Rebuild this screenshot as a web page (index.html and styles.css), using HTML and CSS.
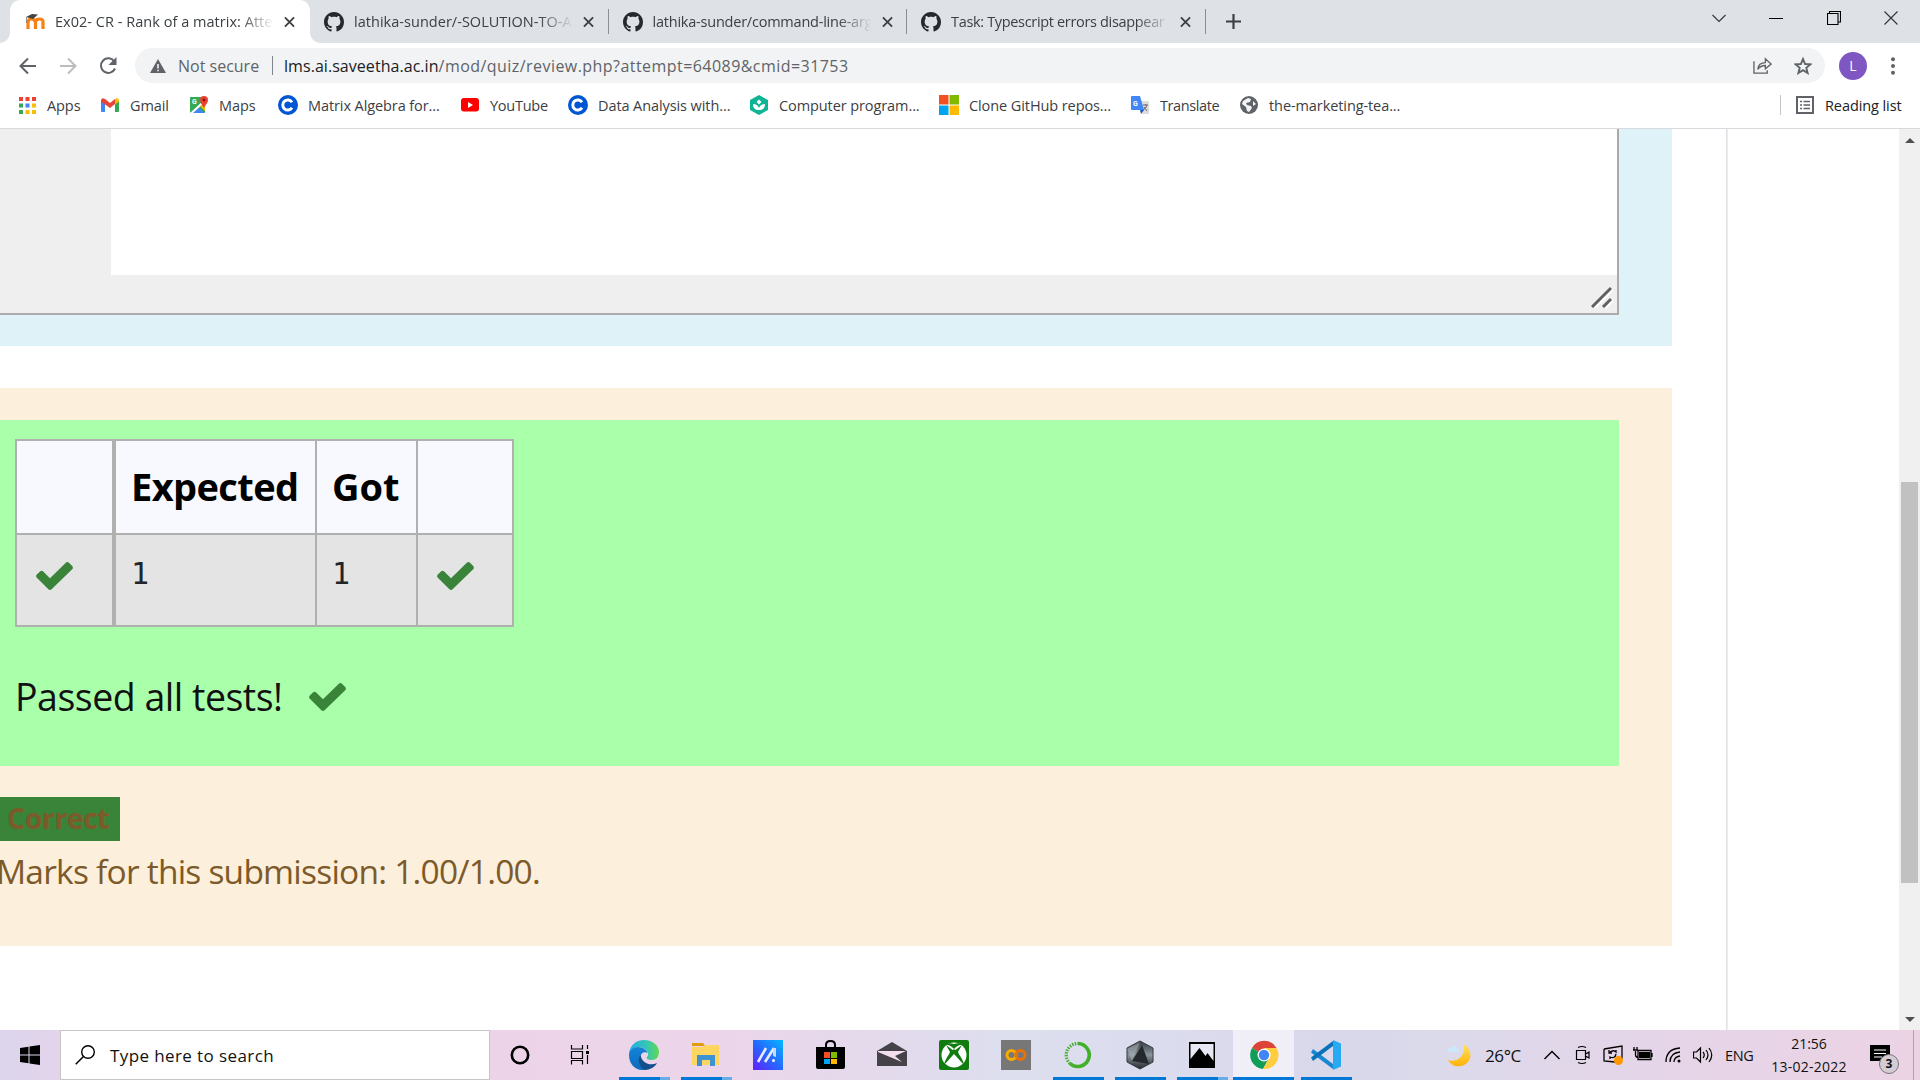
FILE: index.html
```html
<!DOCTYPE html>
<html lang="en">
<head>
<meta charset="utf-8">
<title>Ex02- CR - Rank of a matrix: Attempt review</title>
<link rel="stylesheet" href="styles.css">
</head>
<body>
<svg width="0" height="0" class="defs">
  <symbol id="github" viewBox="0 0 16 16"><path fill="#24292f" d="M8 0C3.58 0 0 3.58 0 8c0 3.54 2.29 6.53 5.47 7.59.4.07.55-.17.55-.38 0-.19-.01-.82-.01-1.49-2.01.37-2.53-.49-2.69-.94-.09-.23-.48-.94-.82-1.13-.28-.15-.68-.52-.01-.53.63-.01 1.08.58 1.23.82.72 1.21 1.87.87 2.33.66.07-.52.28-.87.51-1.07-1.78-.2-3.64-.89-3.64-3.95 0-.87.31-1.59.82-2.15-.08-.2-.36-1.02.08-2.12 0 0 .67-.21 2.2.82.64-.18 1.32-.27 2-.27s1.36.09 2 .27c1.53-1.04 2.2-.82 2.2-.82.44 1.1.16 1.92.08 2.12.51.56.82 1.27.82 2.15 0 3.07-1.87 3.75-3.65 3.95.29.25.54.73.54 1.48 0 1.07-.01 1.93-.01 2.2 0 .21.15.46.55.38A8.01 8.01 0 0 0 16 8c0-4.42-3.58-8-8-8z"/></symbol>
  <symbol id="close" viewBox="0 0 12 12"><path d="M1 1l10 10M11 1L1 11" stroke="#3c4043" stroke-width="2" fill="none"/></symbol>
  <symbol id="check" viewBox="0 0 37 28"><path fill="#398439" d="M36.2 7.3L15.6 27.2c-.9.9-2.3.9-3.200 0L.8 15.800c-.9-.9-.9-2.300 0-3.200l3.200-3.100c.9-.9 2.300-.9 3.200 0l6.800 6.700L29.800.7c.9-.9 2.300-.9 3.200 0l3.200 3.300c.9.900.9 2.400 0 3.300z"/></symbol>
  <symbol id="coursera" viewBox="0 0 20 20"><circle cx="10" cy="10" r="10" fill="#0056d2"/><path d="M14 7.300A5 5 0 1 0 14 12.700" fill="none" stroke="#fff" stroke-width="3"/></symbol>
</svg>
<header class="browser">
  <div class="tabstrip">
    <div class="tab active">
      <svg class="fav" viewBox="0 0 20 20"><path d="M3 17V10.500Q3 7 6.500 7T10.500 10.500V17M10.500 10.500Q10.500 7 14.500 7T18 10.500V17" fill="none" stroke="#f98012" stroke-width="3.200"/><path d="M1 5L7 2 13 2.500 8 7Z" fill="#444"/><path d="M1.500 5v6" stroke="#777" stroke-width=".8"/></svg>
      <span class="tab-title">Ex02- CR - Rank of a matrix: Atte</span><svg class="x"><use href="#close"/></svg>
    </div>
    <div class="tab"><svg class="fav"><use href="#github"/></svg><span class="tab-title">lathika-sunder/-SOLUTION-TO-A</span><svg class="x"><use href="#close"/></svg></div>
    <div class="tab"><svg class="fav"><use href="#github"/></svg><span class="tab-title tight">lathika-sunder/command-line-arg</span><svg class="x"><use href="#close"/></svg></div>
    <div class="tab"><svg class="fav"><use href="#github"/></svg><span class="tab-title tighter">Task: Typescript errors disappear</span><svg class="x"><use href="#close"/></svg></div>
    <svg class="plus" viewBox="0 0 15 15"><path d="M7.500 0v15M0 7.500h15" stroke="#3c4043" stroke-width="2.200"/></svg>
    <div class="wincontrols">
      <svg viewBox="0 0 14 14"><path d="M.5 4l6.500 6.500L13.500 4" fill="none" stroke="#333" stroke-width="1.100"/></svg>
      <svg viewBox="0 0 14 14"><path d="M0 7.500h14" stroke="#000"/></svg>
      <svg viewBox="0 0 14 14"><path d="M.5 2.500h10.500v11H.5zM2.500 2.500v-2h11v10.500H11" fill="none" stroke="#000" stroke-width="1.100"/></svg>
      <svg viewBox="0 0 14 14"><path d="M.5.5l13 13M13.500.5l-13 13" stroke="#333" stroke-width="1.100"/></svg>
    </div>
  </div>
  <div class="toolbar">
    <svg class="nav" viewBox="0 0 18 18"><path d="M17 9H2M9 1.500L1.500 9 9 16.500" fill="none" stroke="#5f6368" stroke-width="2"/></svg>
    <svg class="nav" viewBox="0 0 18 18"><path d="M1 9h15M9 1.500L16.500 9 9 16.500" fill="none" stroke="#babcbe" stroke-width="2"/></svg>
    <svg class="nav" viewBox="0 0 18 18"><path d="M15.300 4.500A7.300 7.300 0 1 0 16 11.500" fill="none" stroke="#5f6368" stroke-width="2"/><path d="M17.500 0v8h-8z" fill="#5f6368"/></svg>
    <div class="omnibox">
      <svg class="warn" viewBox="0 0 16 14"><path d="M8 0l8 14H0z" fill="#5f6368"/><path d="M8 5v4.500M8 10.700v1.600" stroke="#f1f3f4" stroke-width="1.600"/></svg>
      <span class="secure">Not secure</span><i class="bar"></i>
      <span class="host">lms.ai.saveetha.ac.in</span><span class="path">/mod/quiz/review.php?attempt=64089&amp;cmid=31753</span>
      <svg class="share" viewBox="0 0 20 18"><path d="M1 4.500V17h14v-3M5 13c.5-5 3-7 8-7V2l6 5.500-6 5V9c-4 0-6 1-8 4z" fill="none" stroke="#5f6368" stroke-width="1.400"/></svg>
      <svg class="star" viewBox="0 0 18 18"><path d="M9 2l2.100 5 5.300.4-4.100 3.400 1.300 5.200L9 13.200 4.400 16l1.300-5.200-4.100-3.400L6.900 7z" fill="none" stroke="#5f6368" stroke-width="1.900"/></svg>
    </div>
    <span class="avatar">L</span>
    <svg class="dots" viewBox="0 0 4 18"><g fill="#5f6368"><circle cx="2" cy="2.200" r="2"/><circle cx="2" cy="9" r="2"/><circle cx="2" cy="15.800" r="2"/></g></svg>
  </div>
  <div class="bookmarks">
    <a class="bm"><svg class="i17" viewBox="0 0 17 17"><path fill="#ea4335" d="M0 0h4v4H0zM6.500 0h4v4h-4zM13 0h4v4h-4z"/><path fill="#34a853" d="M0 6.500h4v4H0zM0 13h4v4H0z"/><path fill="#4285f4" d="M6.500 6.500h4v4h-4z"/><path fill="#fbbc04" d="M13 6.500h4v4h-4zM6.500 13h4v4h-4zM13 13h4v4h-4z"/></svg><span>Apps</span></a>
    <a class="bm"><svg viewBox="0 0 18 14"><path fill="#4285f4" d="M0 2l4 3v9H1Q0 14 0 13z"/><path fill="#34a853" d="M18 2l-4 3v9h3q1 0 1-1z"/><path fill="#ea4335" d="M0 2Q1-1 4 1l5 4 5-4v5L9 10 0 3.500z"/><path fill="#fbbc04" d="M14 1q3-2 4 1v1.500L14 6.500z"/></svg><span>Gmail</span></a>
    <a class="bm"><svg viewBox="0 0 18 18"><rect y="1" width="15" height="16" rx="1" fill="#34a853"/><path d="M2 17L8 11l7 6z" fill="#4285f4"/><path d="M0 17L14 4v3L3 17z" fill="#fff"/><path d="M10 10l5 5V9z" fill="#fbbc04"/><text x="2" y="8" class="tiny">G</text><path d="M14 12C12 8 10 7 10 4a4 4 0 0 1 8 0c0 3-2 4-4 8z" fill="#ea4335"/><circle cx="14" cy="4" r="1.400" fill="#811"/></svg><span>Maps</span></a>
    <a class="bm"><svg class="i20"><use href="#coursera"/></svg><span>Matrix Algebra for...</span></a>
    <a class="bm youtube"><svg viewBox="0 0 18 14"><rect width="18" height="13.500" rx="3" fill="red"/><path d="M7 4l5 3-5 3z" fill="#fff"/></svg><span>YouTube</span></a>
    <a class="bm"><svg class="i20"><use href="#coursera"/></svg><span>Data Analysis with...</span></a>
    <a class="bm"><svg class="i20" viewBox="0 0 20 20"><path d="M10 0l9 5v10l-9 5-9-5V5z" fill="#0fb494"/><path d="M10 15c-4 0-6-2-6-6 3 0 5 1.500 6 4 1-2.500 3-4 6-4 0 4-2 6-6 6zM10 4.500l2.500 2.500L10 9.500 7.500 7z" fill="#fff"/></svg><span>Computer program...</span></a>
    <a class="bm"><svg class="i20" viewBox="0 0 20 20"><path fill="#f25022" d="M0 0h9.500v9.500H0z"/><path fill="#7fba00" d="M10.500 0H20v9.500h-9.500z"/><path fill="#00a4ef" d="M0 10.500h9.500V20H0z"/><path fill="#ffb900" d="M10.500 10.500H20V20h-9.500z"/></svg><span>Clone GitHub repos...</span></a>
    <a class="bm translate"><svg viewBox="0 0 18 18"><path d="M8 5h9q1 0 1 1v11q0 1-1 1h-6z" fill="#ddd"/><path d="M1 0h8l4 14H1Q0 14 0 13V1q0-1 1-1z" fill="#4285f4"/><path d="M9 14h4l-3 4z" fill="#1a56b8"/><text x="2" y="10" class="tiny">G</text><path d="M12 9h5M14.500 8v1M16 9q-1 4-4 5M13 11l3 4" stroke="#666" fill="none"/></svg><span>Translate</span></a>
    <a class="bm"><svg viewBox="0 0 18 18"><circle cx="9" cy="9" r="9" fill="#5f6368"/><path d="M3 5l5-3 3 1-1 3-4 1 1 2 4 1 1 2-3 4-2-1-1-4-4-3zM13 5l3 3-3 2z" fill="#f4f4f4"/></svg><span>the-marketing-tea...</span></a>
    <a class="bm reading"><svg viewBox="0 0 18 18"><path d="M1 1h16v16H1z" fill="none" stroke="#5f6368" stroke-width="2"/><path d="M4 5.500h2M4 9h2M4 12.500h2M7.500 5.500H14M7.500 9H14M7.500 12.500H14" stroke="#5f6368" stroke-width="1.500"/></svg><span>Reading list</span></a>
  </div>
</header>
<main class="page">
  <section class="content">
    <div class="question">
      <div class="editor"><div class="code"></div><div class="foot"><svg viewBox="0 0 22 22"><path d="M3 22L22 3M14 22l8-8" stroke="#fff" stroke-width="3"/><path d="M1 21L20 2M12 21l8-8" stroke="#606060" stroke-width="3"/></svg></div></div>
    </div>
    <div class="feedback">
      <div class="result">
        <table>
          <tr><th class="c1"></th><th class="c2"><span class="expected">Expected</span></th><th class="c3"><span>Got</span></th><th class="c4"></th></tr>
          <tr><td class="c1"><svg class="ck"><use href="#check"/></svg></td><td class="c2">1</td><td class="c3">1</td><td class="c4"><svg class="ck"><use href="#check"/></svg></td></tr>
        </table>
        <p class="passed"><span>Passed all tests!</span><svg class="ck"><use href="#check"/></svg></p>
      </div>
      <div class="correct">Correct</div>
      <p class="marks"><span>Marks for this submission: 1.00/1.00.</span></p>
    </div>
  </section>
  <div class="side"></div>
  <div class="scrollbar"><i class="up"></i><i class="thumb"></i><i class="down"></i></div>
</main>
<footer class="taskbar">
  <div class="start"><svg viewBox="0 0 20 20"><path d="M0 3l8.500-1.200V9.500H0zM9.500 1.600L20 0v9.500H9.500zM0 10.500h8.500v7.700L0 17zM9.500 10.500H20V20L9.500 18.400z"/></svg></div>
  <div class="search"><svg viewBox="0 0 20 20"><circle cx="13" cy="7" r="6.300" fill="none" stroke="#000" stroke-width="1.400"/><path d="M8.500 11.500L.7 19.300" stroke="#000" stroke-width="1.500"/></svg><span>Type here to search</span></div>
  <div class="app"><svg viewBox="0 0 30 30"><circle cx="15" cy="15" r="8.200" fill="none" stroke="#000" stroke-width="2.600"/></svg></div>
  <div class="app"><svg viewBox="0 0 30 30"><path d="M4.500 5v4h11V5M4.500 24.500v-4h11v4M4.500 11.500h11v7h-11zM20.500 5v4M20.500 15v9" fill="none" stroke="#000" stroke-width="1.200"/><path d="M19 11h3v3h-3z"/></svg></div>
  <div class="app open stack"><svg viewBox="0 0 30 30"><defs><linearGradient id="eg" x1="0" x2="1"><stop offset="0" stop-color="#22aee5"/><stop offset=".6" stop-color="#35c7b4"/><stop offset="1" stop-color="#62d84e"/></linearGradient><linearGradient id="eb" x2="0" y2="1"><stop stop-color="#1585d8"/><stop offset="1" stop-color="#0c69bd"/></linearGradient></defs><path d="M0 14C1 5 7 0 15 0c9 0 15 6 15 12 0 5-3 8-7 8-4 0-6-1-5-3 1-1 1-2 1-3 0-4-5-7-9-7-5 0-9 3-10 7z" fill="url(#eg)"/><path d="M0 15C0 10 4 7 9 7c5 0 9 3 9.500 6-3-2-7 0-7 4 0 5 5 10 12 8-3 4-8 5-10 5C5 30 0 23 0 15z" fill="url(#eb)"/><path d="M11.500 15C8 19 10 27 16 30c5 0 10-3 12-7-6 3-15 1-16.500-8z" fill="#124f8c"/></svg></div>
  <div class="app open stack"><svg viewBox="0 0 30 30"><path d="M1 3h11l2 3H1z" fill="#e19c0c"/><path d="M1 7h11l3-2h13v20H1z" fill="#ffd561"/><path d="M6 26V15h18v11h-5v-6h-8v6z" fill="#3d93d2"/></svg></div>
  <div class="app"><svg viewBox="0 0 30 30"><defs><linearGradient id="ma" x1="0" y1="1" x2="1" y2="0"><stop stop-color="#641dff"/><stop offset=".5" stop-color="#246aff"/><stop offset="1" stop-color="#05b7ff"/></linearGradient></defs><path d="M0 0h30v30H0z" fill="url(#ma)"/><path d="M5 22L13 8M12 22L21 8" stroke="#e8eaff" stroke-width="2.600" fill="none"/><path d="M20 8h3v9l-3-1z" fill="#c9d8ff"/><circle cx="20.500" cy="20.500" r="1.500" fill="#fff"/></svg></div>
  <div class="app"><svg viewBox="0 0 30 30"><path d="M11 7V5q0-4 4.500-4T20 5v2" fill="none" stroke="#000" stroke-width="2"/><path d="M1 7h29v20q0 2-2 2H3q-2 0-2-2z"/><path fill="#f25022" d="M9 12h6v6H9z"/><path fill="#7fba00" d="M16 12h6v6h-6z"/><path fill="#00a4ef" d="M9 19h6v5H9z"/><path fill="#ffb900" d="M16 19h6v5h-6z"/></svg></div>
  <div class="app"><svg viewBox="0 0 30 30"><path d="M0 11L15 2l15 9v15H0z" fill="#464249"/><path d="M1 11h28l-11 5 7 6L1 12z" fill="#f2dff0"/></svg></div>
  <div class="app"><svg viewBox="0 0 30 30"><rect width="30" height="30" rx="2" fill="#107c10"/><circle cx="15" cy="15" r="12.500" fill="#fff"/><path d="M6 5q4-1 9 4 5-5 9-4-4-3-9-1-5-2-9 1zM5 24q3-9 10-15 7 6 10 15-4-6-10-10-6 4-10 10zM7 5l8 6 8-6-4 7 6 13-10-11L5 25l6-13z" fill="#107c10"/></svg></div>
  <div class="app"><svg viewBox="0 0 30 30"><path d="M0 0h30v30H0z" fill="#777"/><circle cx="10.500" cy="15" r="4.500" fill="none" stroke="#f9ab00" stroke-width="3"/><circle cx="19.500" cy="15" r="4.500" fill="none" stroke="#e8710a" stroke-width="3"/></svg></div>
  <div class="app open"><svg viewBox="0 0 30 30"><path d="M15 3.500a11.500 11.500 0 1 1-8 20" fill="none" stroke="#43b02a" stroke-width="3.600"/><path d="M7 23.500A11.500 11.500 0 0 1 15 3.500" fill="none" stroke="#43b02a" stroke-width="3.200" stroke-dasharray="1.500 1.200"/></svg></div>
  <div class="app open"><svg viewBox="0 0 30 30"><defs><linearGradient id="hx" x2="0" y2="1"><stop stop-color="#34393e"/><stop offset=".5" stop-color="#8a949c"/><stop offset="1" stop-color="#252a2e"/></linearGradient></defs><path d="M15 1l13 7v14l-13 7-13-7V8z" fill="url(#hx)" stroke="#353a3f"/><path d="M17 5L7 21l17 3z" fill="#25292d"/><path d="M15 2L7 21 2 9z" fill="#aeb7bd" opacity=".5"/></svg></div>
  <div class="app open stack"><svg viewBox="0 0 30 30"><path d="M2 2h26v26H2z"/><path d="M3.500 4h23v17l-6-8-2 3-6-8-9 11z" fill="#e8e8f4"/></svg></div>
  <div class="app open current"><svg viewBox="0 0 30 30"><path d="M15 15L3 8a14 14 0 0 1 24.500 0z" fill="#db4437"/><path d="M15 15L3 8a14 14 0 0 0 11 21l6-11z" fill="#0f9d58"/><path d="M15 8h12.500A14 14 0 0 1 14 29l6-11z" fill="#ffcd40"/><circle cx="15" cy="15" r="6.500" fill="#fff"/><circle cx="15" cy="15" r="5.200" fill="#4285f4"/></svg></div>
  <div class="app open"><svg viewBox="0 0 30 30"><path d="M2 9l20 15v5L0 12.500z" fill="#1687d0"/><path d="M2 21L22 6V1L0 17.500z" fill="#0873ba"/><path d="M22 0l8 3.500v23L22 30z" fill="#27aaf2"/></svg></div>
  <div class="tray">
    <svg class="moon" viewBox="0 0 24 24"><defs><linearGradient id="mn" x2="0" y2="1"><stop stop-color="#ffe45c"/><stop offset="1" stop-color="#ffb20a"/></linearGradient></defs><path d="M16 1c7 3 10 12 5 18C16 25 5 25 1 17c8 3 19-4 15-16z" fill="url(#mn)"/><path d="M1 9q-1-4 3-4 2-4 5-1 4 1 2 5z" fill="#c9e9fb"/></svg>
    <span class="temp">26°C</span>
    <svg class="chev" viewBox="0 0 16 10"><path d="M.5 9L8 1.500 15.500 9" fill="none" stroke="#000" stroke-width="1.400"/></svg>
    <svg class="tr" viewBox="0 0 20 20"><path d="M3.500 5.500h9v9h-9zM12.500 9l3.500-2v6l-3.500-2M5 2.500q4-2 8 0M5 17.500q4 2 8 0" fill="none" stroke="#000" stroke-width="1.200"/></svg>
    <svg class="tr" viewBox="0 0 20 20"><path d="M1 4l18-3v13M12 17L1 16V4M6 8q4-4 7-1V5M13 9q-1 5-6 3v2M6 5v3h3" fill="none" stroke="#000" stroke-width="1.300"/><circle cx="15.500" cy="15.500" r="4.500" fill="#ff9800"/></svg>
    <svg class="tr" viewBox="0 0 20 20"><path d="M5 5.500h13v9H5zM19 8v4M0 5h5M1 2v3M4 2v3M2.500 6v4q0 2 3 3" fill="none" stroke="#000" stroke-width="1.300"/><path d="M6 7h11v6H6z"/></svg>
    <svg class="tr" viewBox="0 0 20 20"><path d="M3 17Q3 4 17 3M7 17q0-9 10-10M11 17q0-5 6-6" fill="none" stroke="#000" stroke-width="1.300"/><circle cx="16" cy="16" r="1.500"/></svg>
    <svg class="tr" viewBox="0 0 20 20"><path d="M.5 7h3L7.500 3v14l-4-4h-3zM10 7q2.500 3 0 6M13 5q4 5 0 10M16 3q5.500 7 0 14" fill="none" stroke="#000" stroke-width="1.200"/></svg>
    <span class="lang">ENG</span>
    <div class="clock"><span>21:56</span><span class="date">13-02-2022</span></div>
    <div class="notif"><svg viewBox="0 0 20 20"><path d="M0 0h20v16h-6l-4 4v-4H0z"/><path d="M4 5h12M4 8.500h12M4 12h8" stroke="#fff" stroke-width="1.200"/></svg><b class="badge">3</b></div>
  </div>
</footer>
</body>
</html>
```
FILE: styles.css
```css
* { box-sizing: border-box; }
body { margin: 0; width: 1920px; height: 1080px; overflow: hidden; display: flex; flex-direction: column; background: #fff; font-family: "Open Sans", "Noto Sans", sans-serif; font-size: 14px; color: #3c4043; }
svg { flex: none; display: block; }
p { margin: 0; }
span { white-space: nowrap; }
.defs { position: absolute; }

/* Browser chrome */
.browser { height: 129px; flex: none; border-bottom: 1px solid #d8d9dc; }
.tabstrip { height: 43px; background: #dee1e6; display: flex; align-items: center; padding-left: 10px; }
.tab { width: 298.500px; height: 43px; display: flex; align-items: center; padding-left: 14px; background: linear-gradient(#8a8d91, #8a8d91) right 9px / 1px 25px no-repeat; }
.tab.active { width: 300px; background: #fff; border-radius: 10px 10px 0 0; padding-left: 15px; position: relative; }
.tab.active::before, .tab.active::after { content: ""; position: absolute; bottom: 0; width: 10px; height: 10px; }
.tab.active::before { left: -10px; background: radial-gradient(circle at 0 0, transparent 9.500px, #fff 10px); }
.tab.active::after { right: -10px; background: radial-gradient(circle at 100% 0, transparent 9.500px, #fff 10px); }
.fav { width: 20px; height: 20px; margin-right: 10px; }
.tab-title { width: 218px; overflow: hidden; -webkit-mask-image: linear-gradient(90deg, #000 185px, transparent 219px); mask-image: linear-gradient(90deg, #000 185px, transparent 219px); line-height: 24px; font-size: 14.500px; letter-spacing: 0.030px; }
.tight { letter-spacing: -0.220px; }
.tighter { letter-spacing: -0.330px; }
.x { width: 11px; height: 12px; margin-left: 11px; }
.plus { width: 15px; height: 15px; margin-left: 20px; }
.wincontrols { margin-left: auto; display: flex; gap: 43.500px; padding: 0 22px 7px 0; }
.wincontrols svg { width: 14px; height: 14px; }
.toolbar { height: 45px; display: flex; align-items: center; padding-left: 19px; }
.nav { width: 18px; height: 18px; margin-right: 22px; }
.omnibox { margin-left: -4px; width: 1690px; height: 35px; border-radius: 18px; background: #f1f3f4; display: flex; align-items: center; padding-left: 15px; font-size: 16px; }
.warn { width: 16px; height: 14px; margin-right: 12px; }
.secure { width: 84px; color: #5f6368; }
.bar { width: 1px; height: 19px; background: #80868b; margin: 0 11px 0 10px; }
.host { color: #202124; letter-spacing: 0.050px; }
.path { color: #5f6368; letter-spacing: 0.450px; }
.share { width: 19px; height: 19px; margin-left: auto; }
.star { width: 18px; height: 20px; margin: 0 13px 0 22px; }
.avatar { width: 28px; height: 28px; border-radius: 50%; background: #7e57c2; color: #fff; margin-left: 14px; text-align: center; line-height: 28px; }
.dots { width: 4px; height: 18px; margin-left: 24px; }
.bookmarks { height: 40px; display: grid; grid-template-columns: 82px 89px 88px 182px 108px 181px 190px 191px 110px 540px 118px; padding: 0 0 4px 19px; align-items: center; margin-top: -1px; font-size: 14.500px; letter-spacing: -0.090px; }
.bm { display: flex; align-items: center; }
.bm svg { width: 18px; height: 18px; margin-right: 11px; }
.bm .i17 { width: 17px; height: 17px; }
.bm .i20 { width: 20px; height: 20px; margin-right: 10px; }
.youtube { letter-spacing: -0.250px; padding-left: 1px; }
.translate { letter-spacing: -0.400px; padding-left: 1px; }
.tiny { font: bold 7px Roboto, sans-serif; fill: #fff; }
.reading { border-left: 1px solid #c4c7ca; padding-left: 15px; color: #202124; height: 20px; }

/* Quiz review page */
.page { height: 901px; display: flex; flex: none; }
.content { width: 1727px; border-right: 1px solid #dee2e6; flex: none; }
.question { width: 1672px; height: 217px; background: #def2f8; }
.editor { width: 1619px; height: 186px; background: #efefef; border: solid #aaa; border-width: 0 2px 2px 0; padding-left: 111px; }
.code { height: 146px; background: #fff; }
.foot { height: 38px; display: flex; justify-content: flex-end; padding: 11px 4px 0; }
.foot svg { width: 22px; height: 22px; }
.feedback { width: 1672px; height: 558px; margin-top: 42px; background: #fcefdc; padding-top: 32px; }
.result { width: 1619px; height: 346px; background: #afa; padding: 19px 0 0 15px; }
table { border-collapse: collapse; table-layout: fixed; width: 499px; }
th, td { border: 2px solid #b0b0b0; padding: 0 0 0 15px; text-align: left; }
th { height: 94px; background: #f8f8ff; color: #000; font-size: 38px; line-height: 60px; padding-bottom: 2px; }
td { height: 92px; background: #e4e4e4; color: #212529; font: 30px/48px "DejaVu Sans Mono", monospace; padding-bottom: 13px; }
.c1 { width: 98px; border-right-width: 4px; }
.c2 { width: 202px; }
.c3 { width: 101px; }
.expected { letter-spacing: -0.600px; }
.ck { width: 37px; height: 28px; margin: 4px 0 0 4px; }
.passed { display: flex; align-items: center; margin-top: 39px; height: 60px; color: #111; font-size: 37.500px; letter-spacing: -0.490px; }
.passed .ck { margin: 1px 0 0 26px; }
.correct { width: 120px; height: 44px; margin-top: 31px; background: #398439; color: #7d5a29; font-weight: 700; font-size: 28.500px; line-height: 43px; padding-left: 7px; letter-spacing: -0.510px; }
.marks { color: #7d5a29; font-size: 33.500px; letter-spacing: -0.780px; line-height: 46px; margin: 7px 0 0 -4px; }
.side { flex: 1; border-left: 1px solid #ebedef; }
.scrollbar { width: 21px; background: #f0f0f0; display: flex; flex-direction: column; align-items: center; padding: 9px 0 8px; }
.up, .down { border: 5px solid transparent; border-top: 0; border-bottom: 5px solid #505050; }
.down { margin-top: auto; border-top: 5px solid #505050; border-bottom: 0; }
.thumb { width: 17px; height: 401px; margin-top: 339px; background: #c1c1c1; }

/* Windows taskbar */
.taskbar { height: 50px; display: flex; background: linear-gradient(90deg, #dcd5ec 0, #e3d4ea 60px, #ecd3e8 480px, #ecd5ea 720px, #dddeee 1000px, #dbdced 1150px, #d9d7ea 1370px, #dadaeb 1420px, #e5d5e8 1650px, #ebd3e4 1920px); color: #111; }
.start { width: 60px; flex: none; padding: 15px 20px; }
.start svg { width: 20px; height: 20px; }
.search { width: 430px; flex: none; background: #fff; border: 1px solid #c6c6c6; display: flex; align-items: center; padding-left: 14px; font-size: 17px; letter-spacing: 0.400px; margin-right: -1px; }
.search svg { width: 20px; height: 20px; margin-right: 15px; }
.app { width: 62px; height: 50px; padding: 10px 0 7px 16px; flex: none; }
.app svg { width: 30px; height: 30px; }
.open { background: linear-gradient(#0078d7, #0078d7) 6px bottom / 51px 3px no-repeat; }
.stack { background: linear-gradient(90deg, #0078d7 41px, #66aee5 41px) 6px bottom / 51px 3px no-repeat; }
.current { background: linear-gradient(#0078d7, #0078d7) 0 bottom / 61px 3px no-repeat, linear-gradient(#f0eff8, #f0eff8) 0 0 / 61px 50px no-repeat; }
.tray { flex: 1; min-width: 0; display: flex; align-items: center; padding-left: 90px; }
.moon { width: 24px; height: 24px; margin-right: 14px; }
.temp { width: 59px; font-size: 17px; letter-spacing: -0.400px; }
.chev { width: 16px; height: 10px; margin-right: 13px; }
.tr { width: 20px; height: 20px; margin-right: 10px; }
.lang { width: 46px; font-size: 14.500px; margin-left: 2px; letter-spacing: -0.300px; }
.clock { width: 76px; display: flex; flex-direction: column; align-items: center; font-size: 14px; line-height: 23px; }
.date { letter-spacing: 0.250px; }
.notif { width: 44px; height: 50px; margin-left: 23px; padding-top: 15px; position: relative; border-right: 1px solid #aaa3b0; }
.notif svg { width: 20px; height: 20px; }
.badge { position: absolute; left: 9px; top: 24px; width: 20px; height: 20px; border-radius: 50%; border: 1px solid #777; background: #d5cbd5; font-size: 12px; line-height: 18px; text-align: center; }
```
